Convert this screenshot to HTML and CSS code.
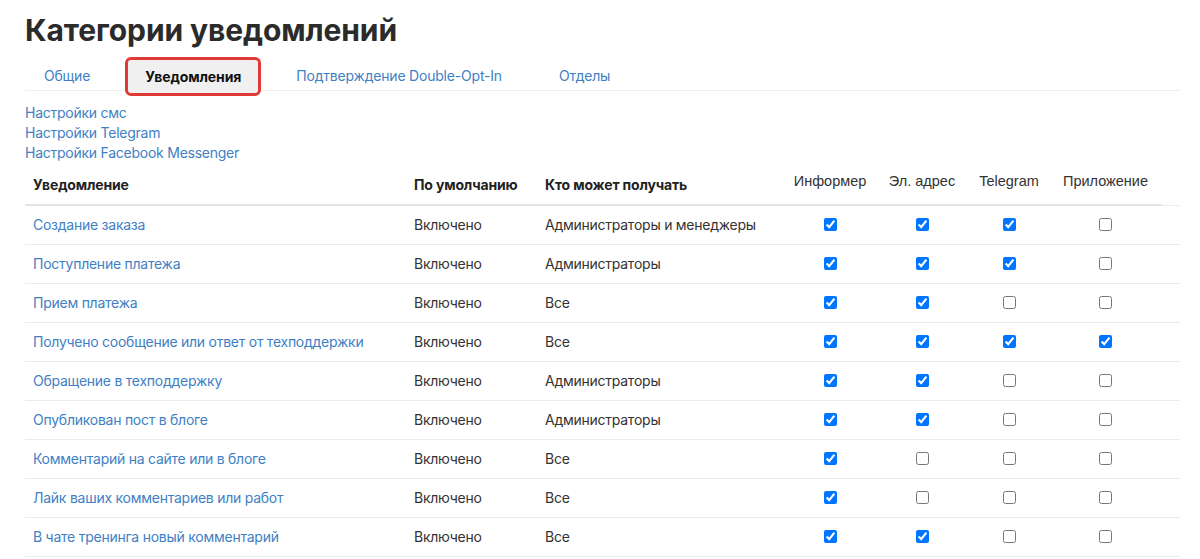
FILE: index.html
```html
<!DOCTYPE html>
<html lang="ru">

<head>
    <meta charset="UTF-8">
    <meta name="viewport" content="width=device-width, initial-scale=1.0">
    <title>Категории уведомлений</title>
    <link rel="stylesheet" href="styles.css">
</head>

<body>
    <div class="page">
        <h1 class="title">Категории уведомлений</h1>

        <ul class="tabs">
            <li><a href="#" class="tab">Общие</a></li>
            <li><a href="#" class="tab active">Уведомления</a></li>
            <li><a href="#" class="tab">Подтверждение Double-Opt-In</a></li>
            <li><a href="#" class="tab">Отделы</a></li>
        </ul>

        <div class="settings">
            <a href="#">Настройки смс</a>
            <a href="#">Настройки Telegram</a>
            <a href="#">Настройки Facebook Messenger</a>
        </div>

        <table class="notify">
            <colgroup>
                <col style="width: 381px">
                <col style="width: 131px">
                <col style="width: 248px">
                <col style="width: 90px">
                <col style="width: 94px">
                <col style="width: 80px">
                <col style="width: 113px">
                <col style="width: 18px">
            </colgroup>
            <thead>
                <tr>
                    <th>Уведомление</th>
                    <th>По умолчанию</th>
                    <th>Кто может получать</th>
                    <th class="channel">Информер</th>
                    <th class="channel">Эл. адрес</th>
                    <th class="channel">Telegram</th>
                    <th class="channel">Приложение</th>
                    <th class="spacer"></th>
                </tr>
            </thead>
            <tbody>
                <tr>
                    <td><a href="#">Создание заказа</a></td>
                    <td>Включено</td>
                    <td>Администраторы и менеджеры</td>
                    <td class="check"><input type="checkbox" checked></td>
                    <td class="check"><input type="checkbox" checked></td>
                    <td class="check"><input type="checkbox" checked></td>
                    <td class="check"><input type="checkbox"></td>
                    <td></td>
                </tr>
                <tr>
                    <td><a href="#">Поступление платежа</a></td>
                    <td>Включено</td>
                    <td>Администраторы</td>
                    <td class="check"><input type="checkbox" checked></td>
                    <td class="check"><input type="checkbox" checked></td>
                    <td class="check"><input type="checkbox" checked></td>
                    <td class="check"><input type="checkbox"></td>
                    <td></td>
                </tr>
                <tr>
                    <td><a href="#">Прием платежа</a></td>
                    <td>Включено</td>
                    <td>Все</td>
                    <td class="check"><input type="checkbox" checked></td>
                    <td class="check"><input type="checkbox" checked></td>
                    <td class="check"><input type="checkbox"></td>
                    <td class="check"><input type="checkbox"></td>
                    <td></td>
                </tr>
                <tr>
                    <td><a href="#">Получено сообщение или ответ от техподдержки</a></td>
                    <td>Включено</td>
                    <td>Все</td>
                    <td class="check"><input type="checkbox" checked></td>
                    <td class="check"><input type="checkbox" checked></td>
                    <td class="check"><input type="checkbox" checked></td>
                    <td class="check"><input type="checkbox" checked></td>
                    <td></td>
                </tr>
                <tr>
                    <td><a href="#">Обращение в техподдержку</a></td>
                    <td>Включено</td>
                    <td>Администраторы</td>
                    <td class="check"><input type="checkbox" checked></td>
                    <td class="check"><input type="checkbox" checked></td>
                    <td class="check"><input type="checkbox"></td>
                    <td class="check"><input type="checkbox"></td>
                    <td></td>
                </tr>
                <tr>
                    <td><a href="#">Опубликован пост в блоге</a></td>
                    <td>Включено</td>
                    <td>Администраторы</td>
                    <td class="check"><input type="checkbox" checked></td>
                    <td class="check"><input type="checkbox" checked></td>
                    <td class="check"><input type="checkbox"></td>
                    <td class="check"><input type="checkbox"></td>
                    <td></td>
                </tr>
                <tr>
                    <td><a href="#">Комментарий на сайте или в блоге</a></td>
                    <td>Включено</td>
                    <td>Все</td>
                    <td class="check"><input type="checkbox" checked></td>
                    <td class="check"><input type="checkbox"></td>
                    <td class="check"><input type="checkbox"></td>
                    <td class="check"><input type="checkbox"></td>
                    <td></td>
                </tr>
                <tr>
                    <td><a href="#">Лайк ваших комментариев или работ</a></td>
                    <td>Включено</td>
                    <td>Все</td>
                    <td class="check"><input type="checkbox" checked></td>
                    <td class="check"><input type="checkbox"></td>
                    <td class="check"><input type="checkbox"></td>
                    <td class="check"><input type="checkbox"></td>
                    <td></td>
                </tr>
                <tr>
                    <td><a href="#">В чате тренинга новый комментарий</a></td>
                    <td>Включено</td>
                    <td>Все</td>
                    <td class="check"><input type="checkbox" checked></td>
                    <td class="check"><input type="checkbox" checked></td>
                    <td class="check"><input type="checkbox"></td>
                    <td class="check"><input type="checkbox"></td>
                    <td></td>
                </tr>
            </tbody>
        </table>
    </div>
</body>

</html>
```

FILE: styles.css
```css
* {
    padding: 0;
    margin: 0;
    box-sizing: border-box;
    font-family: "Inter", "Noto Sans", sans-serif;
}

body {
    background-color: #ffffff;
    color: #333;
}

.page {
    padding: 10px 20px 0 25px;
}

.title {
    color: #2b2b2b;
    font-size: 30px;
    font-weight: 700;
    line-height: 40px;
    letter-spacing: -0.1px;
}

.tabs {
    list-style: none;
    display: flex;
    gap: 19px;
    margin-top: 8px;
    border-bottom: 1px solid #eeeeee;
    height: 33px;
}

.tab {
    display: block;
    padding: 9px 19px 7px;
    line-height: 17px;
    font-size: 14px;
    letter-spacing: -0.2px;
    color: #3f7fc4;
    text-decoration: none;
}

.tab.active {
    color: #111;
    font-weight: 700;
    background-color: #f0f0f0;
    border-radius: 3px;
    outline: 3px solid #e03a36;
    margin-top: 2px;
    padding: 8px 17px;
    letter-spacing: -0.1px;
}

.settings {
    display: flex;
    flex-direction: column;
    align-items: flex-start;
    margin-top: 12px;
}

.settings a {
    color: #3f7fc4;
    font-size: 14px;
    line-height: 20px;
    letter-spacing: -0.25px;
    text-decoration: none;
}

.notify {
    width: 1155px;
    table-layout: fixed;
    border-collapse: collapse;
    margin-top: 3px;
    font-size: 14px;
}

.notify th {
    text-align: left;
    font-weight: 700;
    color: #222;
    padding: 10px 8px;
    line-height: 18px;
    letter-spacing: -0.15px;
    border-bottom: 2px solid #e4e4e4;
    vertical-align: middle;
}

.notify th.channel {
    text-align: center;
    font-weight: 400;
    font-family: "Liberation Sans", Arial, sans-serif;
    font-size: 14.5px;
    letter-spacing: 0;
    color: #333;
    vertical-align: top;
    padding: 6px 4px;
}

.notify th.spacer {
    border-bottom: 1px solid #eeeeee;
}

.notify td {
    padding: 10px 8px;
    line-height: 18px;
    letter-spacing: -0.25px;
    border-bottom: 1px solid #eaeaea;
    color: #333;
    white-space: nowrap;
}

.notify td a {
    color: #3f7fc4;
    text-decoration: none;
}

.notify td.check {
    text-align: center;
    padding: 12px 8px 13px;
}

.check input {
    display: block;
    width: 13px;
    height: 13px;
    margin: 0 auto;
}
```
